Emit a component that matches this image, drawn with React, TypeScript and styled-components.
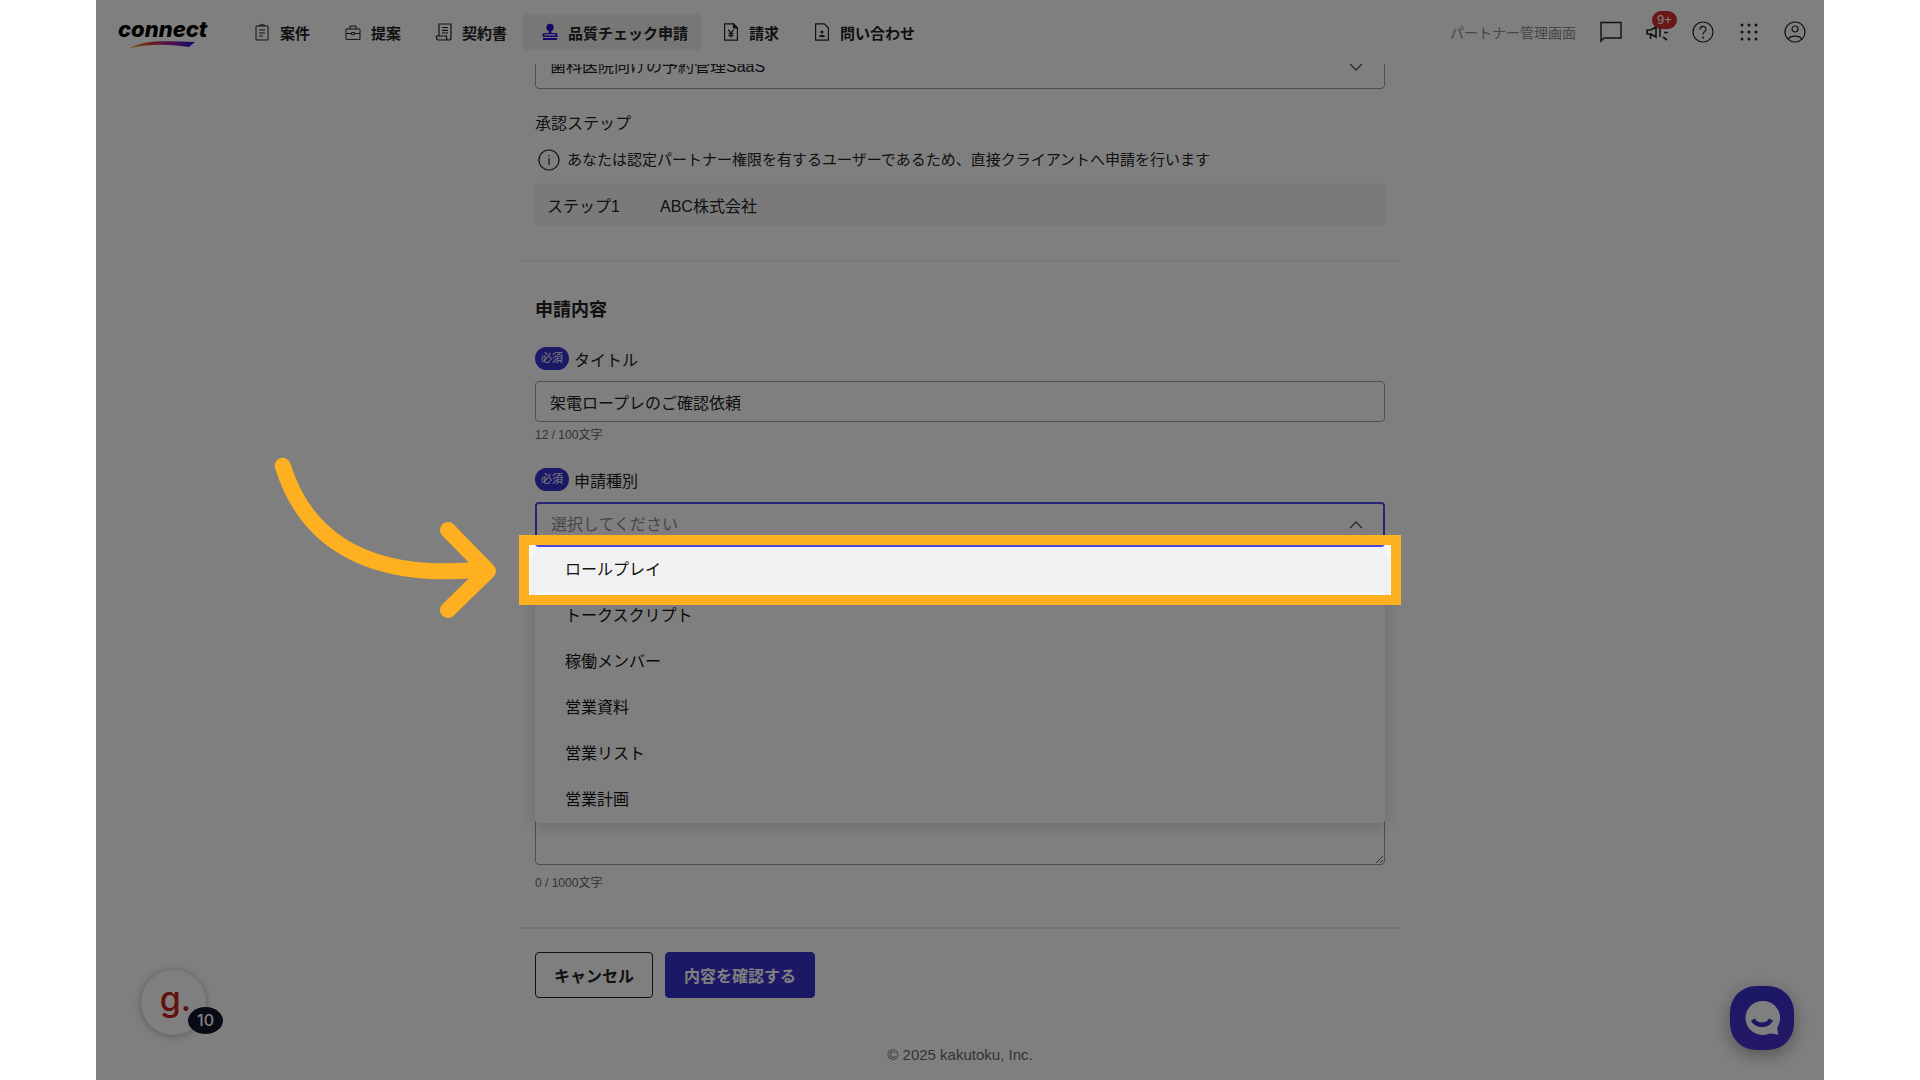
import React, { useState } from "react";
import styled, { createGlobalStyle } from "styled-components";

const color = {
  ink: "#222222",
  sub: "#666666",
  faint: "#8c8c8c",
  line: "#e8e8e8",
  softLine: "#f2f2f2",
  border: "#9a9a9a",
  brand: "#3730cc",
  focus: "#4f4ae4",
  red: "#d32f2f",
  guide: "#ffb020",
};

const Global = createGlobalStyle`
  *, *::before, *::after { box-sizing: border-box; }
  body { margin: 0; background: #ffffff; }
  body, input, select, textarea, button {
    font-family: "Liberation Sans", "Noto Sans CJK JP", sans-serif;
    color: ${color.ink};
  }
`;

const Stage = styled.div`
  position: relative;
  min-height: 100vh;
  margin: 0 5%;
  overflow: hidden;
  background: #ffffff;
`;

const Header = styled.header`
  position: relative;
  z-index: 1;
  display: flex;
  align-items: center;
  height: 64px;
  padding: 0 18px 0 22px;
  background: #ffffff;
`;

const Logo = styled.a`
  display: flex;
  flex-direction: column;
  width: 117px;
  color: #000000;
  font: italic 800 22px/24px Inter, sans-serif;
  text-decoration: none;
  svg { display: block; margin-left: 12px; }
`;

const Nav = styled.nav`
  display: flex;
  gap: 3px;
`;

const NavLink = styled.a<{ $active?: boolean }>`
  display: flex;
  align-items: center;
  gap: 9px;
  height: 36px;
  padding: 0 13px 0 18px;
  border-radius: 4px;
  background: ${(p) => (p.$active ? "#efefec" : "transparent")};
  color: ${color.ink};
  font-size: 15px;
  font-weight: 700;
  white-space: nowrap;
  text-decoration: none;
`;

const Tools = styled.div`
  display: flex;
  align-items: center;
  gap: 24px;
  margin-left: auto;
`;

const AdminLink = styled.a`
  color: ${color.faint};
  font-size: 14px;
  text-decoration: none;
`;

const IconButton = styled.button`
  position: relative;
  display: flex;
  padding: 0;
  border: 0;
  background: none;
`;

const Count = styled.span`
  position: absolute;
  top: -10px;
  left: 6px;
  padding: 0 5px;
  border-radius: 9px;
  background: ${color.red};
  color: #ffffff;
  font-size: 13px;
  line-height: 18px;
`;

const Main = styled.main`
  max-width: 880px;
  margin: -20px auto 0;
`;

const Section = styled.section`
  display: flex;
  flex-direction: column;
  padding: 0 15px;
`;

const Divider = styled.hr<{ $top: number; $soft?: boolean }>`
  height: 2px;
  margin: ${(p) => p.$top}px 0 0;
  border: 0;
  background: ${(p) => (p.$soft ? color.softLine : color.line)};
`;

const SelectBox = styled.div`
  display: grid;
  align-items: center;
  > * { grid-area: 1 / 1; }
  svg { justify-self: end; margin-right: 22px; pointer-events: none; }
`;

const Select = styled.select<{ $open?: boolean }>`
  appearance: none;
  width: 100%;
  height: 45px;
  padding: 0 14px;
  border: ${(p) => (p.$open ? `2px solid ${color.focus}` : `1px solid ${color.border}`)};
  border-radius: 4px;
  outline: 0;
  background: #ffffff;
  color: ${(p) => (p.$open ? color.faint : color.ink)};
  font-size: 16px;
`;

const StepLabel = styled.h3`
  margin: 23px 0 0;
  font-size: 16px;
  font-weight: 400;
  line-height: 24px;
`;

const Notice = styled.p`
  display: flex;
  align-items: center;
  gap: 7px;
  margin: 12px 0 0;
  padding-left: 3px;
  font-size: 15px;
  line-height: 24px;
`;

const StepRow = styled.dl`
  display: flex;
  align-items: center;
  height: 43px;
  margin: 11px 0 0;
  padding: 0 12px;
  background: #f5f5f5;
  font-size: 16px;
  dt { flex: 0 0 113px; }
  dd { margin: 0; }
`;

const Heading = styled.h2`
  margin: 36px 0 0;
  font-size: 18px;
  line-height: 24px;
`;

const Field = styled.div`
  display: flex;
  flex-direction: column;
  margin-top: 25px;
`;

const Label = styled.label`
  display: flex;
  align-items: center;
  gap: 5px;
  height: 23px;
  margin-bottom: 11px;
  font-size: 16px;
`;

const Required = styled.span`
  padding: 0 6px;
  border-radius: 12px;
  background: ${color.brand};
  color: #ffffff;
  font-size: 11px;
  line-height: 23px;
`;

const TextInput = styled.input`
  height: 41px;
  padding: 0 14px;
  border: 1px solid ${color.border};
  border-radius: 4px;
  font-size: 16px;
`;

const TextArea = styled.textarea`
  height: 243px;
  margin-top: 75px;
  padding: 14px;
  border: 1px solid ${color.border};
  border-radius: 4px;
  font-size: 16px;
`;

const Counter = styled.span<{ $top: number }>`
  margin-top: ${(p) => p.$top}px;
  color: ${color.sub};
  font-size: 12px;
  line-height: 16px;
`;

const Anchor = styled.div`
  position: relative;
`;

const Menu = styled.ul`
  position: absolute;
  top: 100%;
  left: 0;
  right: 0;
  margin: 0;
  padding: 0;
  border-radius: 0 0 4px 4px;
  background: #ffffff;
  box-shadow: 0 4px 16px rgba(0, 0, 0, 0.16);
  list-style: none;
`;

const Option = styled.li<{ $hover?: boolean }>`
  padding: 0 30px;
  background: ${(p) => (p.$hover ? "#f1f1f1" : "transparent")};
  color: #111111;
  font-size: 16px;
  line-height: 46px;
`;

const Spotlight = styled.div`
  position: absolute;
  z-index: 10;
  top: 33px;
  left: -16px;
  right: -16px;
  height: 70px;
  border: 10px solid ${color.guide};
  box-shadow: 0 0 0 3000px rgba(0, 0, 0, 0.5);
  pointer-events: none;
`;

const Arrow = styled.svg`
  position: absolute;
  z-index: 11;
  top: -46px;
  right: calc(100% + 37px);
`;

const Actions = styled.div`
  display: flex;
  gap: 12px;
  margin-top: 23px;
`;

const Button = styled.button<{ $primary?: boolean }>`
  height: 46px;
  padding: 0 18px;
  border: 1px solid ${(p) => (p.$primary ? color.brand : color.ink)};
  border-radius: 4px;
  background: ${(p) => (p.$primary ? color.brand : "#ffffff")};
  color: ${(p) => (p.$primary ? "#ffffff" : color.ink)};
  font-size: 16px;
  font-weight: 700;
`;

const Footer = styled.footer`
  margin-top: 45px;
  color: ${color.sub};
  font-size: 15px;
  line-height: 24px;
  text-align: center;
`;

const GuideButton = styled.button`
  position: absolute;
  z-index: 1;
  bottom: 45px;
  left: 45px;
  width: 65px;
  height: 65px;
  padding: 0 0 8px 4px;
  border: 0;
  border-radius: 50%;
  background: #ffffff;
  box-shadow: 0 1px 8px rgba(0, 0, 0, 0.3);
  color: #c8201a;
  font: 500 34px/34px Inter, sans-serif;
`;

const GuideCount = styled.span`
  position: absolute;
  left: 47px;
  top: 37px;
  width: 35px;
  border-radius: 50%;
  background: #10142a;
  color: #ffffff;
  font: 500 16px/27px Inter, sans-serif;
  text-align: center;
`;

const ChatButton = styled.button`
  position: absolute;
  z-index: 1;
  right: 30px;
  bottom: 30px;
  display: grid;
  place-items: center;
  width: 64px;
  height: 64px;
  padding: 0;
  border: 0;
  border-radius: 26px;
  background: linear-gradient(#3731cc, #4a30cc);
  box-shadow: 0 5px 18px rgba(0, 0, 0, 0.35);
`;

const Line = ({ size = 18, children }: { size?: number; children: React.ReactNode }) => (
  <svg width={size} height={size} viewBox={`0 0 ${size} ${size}`} fill="none" stroke="#222" strokeWidth="1.2" aria-hidden="true">
    {children}
  </svg>
);

const Chevron = ({ up }: { up?: boolean }) => (
  <svg width="14" height="8" viewBox="0 0 14 8" fill="none" stroke="#444" strokeWidth="1.2" aria-hidden="true">
    <path d={up ? "M1 7l6-6 6 6" : "M1 1l6 6 6-6"} />
  </svg>
);

const icons = {
  cases: (
    <Line>
      <path d="M3 3h12v14H3zM6.500 3V2h5v1M9 2V.8M6 7h6M6 10h6M6 13h4" strokeWidth="1" />
    </Line>
  ),
  proposal: (
    <Line>
      <path d="M2 6h14v10.400H2zM6 6V3h6v3M2 10.500h5.500M10.500 10.500H16M7.500 9.500h3v2.200h-3z" strokeWidth="1" />
    </Line>
  ),
  contract: (
    <Line>
      <path d="M4 13V1h12v14a2 2 0 0 1-2 2H3.500a2 2 0 0 1-2-2v-2h10v2a2 2 0 0 0 2 2M7 4.500h6M7 7.300h6M7 10h6" />
    </Line>
  ),
  stamp: (
    <svg width="18" height="18" viewBox="0 0 18 18" fill="#2a0fd0" aria-hidden="true">
      <circle cx="9" cy="4.500" r="3.700" />
      <path d="M8 7h2l.5 3h4.500a1.500 1.500 0 0 1 1.500 1.500V14h-15v-2.500A1.500 1.500 0 0 1 3 10h4.500zM2 15h14v2H2z" />
      <path d="M3.500 11.200h11v1.300h-11z" fill="#efefec" />
    </svg>
  ),
  invoice: (
    <Line>
      <path d="M2.600.8h9L15.400 5v12.200H2.600zM6.300 6.700L9 10.200l2.700-3.500M9 10v4.500M6.500 10.600h5M6.500 12.600h5" />
      <path d="M11.500.8L15.400 5h-3.900z" fill="#222" />
    </Line>
  ),
  inquiry: (
    <Line>
      <path d="M2.600.8h8.700L15.400 5v12.200H2.600z" />
      <circle cx="9" cy="9" r="1.500" fill="#222" stroke="none" />
      <path d="M6 14c0-3 6-3 6 0z" fill="#222" stroke="none" />
    </Line>
  ),
};

const navItems: { label: string; icon: keyof typeof icons; active?: boolean }[] = [
  { label: "案件", icon: "cases" },
  { label: "提案", icon: "proposal" },
  { label: "契約書", icon: "contract" },
  { label: "品質チェック申請", icon: "stamp", active: true },
  { label: "請求", icon: "invoice" },
  { label: "問い合わせ", icon: "inquiry" },
];

const kinds = ["ロールプレイ", "トークスクリプト", "稼働メンバー", "営業資料", "営業リスト", "営業計画"];

export default function App() {
  const [title, setTitle] = useState("架電ロープレのご確認依頼");
  const [body, setBody] = useState("");

  return (
    <>
      <Global />
      <Stage>
        <Header>
          <Logo href="#">
            connect
            <svg width="66" height="7" viewBox="0 0 66 7" aria-hidden="true">
              <defs>
                <linearGradient id="swoosh">
                  <stop offset="0" stopColor="#f5a623" />
                  <stop offset=".3" stopColor="#e0402f" />
                  <stop offset=".6" stopColor="#a0209c" />
                  <stop offset="1" stopColor="#2a10e0" />
                </linearGradient>
              </defs>
              <path d="M0 7C16-1 30 0 65 1L59 6C36 3 20 3 0 7z" fill="url(#swoosh)" />
            </svg>
          </Logo>
          <Nav>
            {navItems.map((n) => (
              <NavLink key={n.label} href="#" $active={n.active}>
                {icons[n.icon]}
                {n.label}
              </NavLink>
            ))}
          </Nav>
          <Tools>
            <AdminLink href="#">パートナー管理画面</AdminLink>
            <IconButton aria-label="メッセージ">
              <Line size={22}>
                <path d="M1 1.500h20v15.500H4L1 20z" strokeWidth="1.400" />
              </Line>
            </IconButton>
            <IconButton aria-label="お知らせ">
              <Line size={22}>
                <path d="M1 9h4l5-3v10l-5-3H1zM4.500 13V18M14 7v9M18 11.500h4M17 16l4 3" strokeWidth="1.600" />
              </Line>
              <Count>9+</Count>
            </IconButton>
            <IconButton aria-label="ヘルプ">
              <Line size={22}>
                <circle cx="11" cy="11" r="10" />
                <path d="M8 8.500c0-4 6-4 6-.3 0 2.300-3 2.600-3 5.300" />
                <circle cx="11" cy="16.500" r="1" fill="#222" stroke="none" />
              </Line>
            </IconButton>
            <IconButton aria-label="アプリ一覧">
              <Line size={22}>
                {[4, 11, 18].map((y) =>
                  [4, 11, 18].map((x) => <circle key={`${x}-${y}`} cx={x} cy={y} r="1.500" fill="#222" stroke="none" />),
                )}
              </Line>
            </IconButton>
            <IconButton aria-label="アカウント">
              <Line size={22}>
                <circle cx="11" cy="11" r="10" />
                <circle cx="11" cy="8" r="3" />
                <path d="M4.300 18.200c2-4 11.400-4 13.400 0" />
              </Line>
            </IconButton>
          </Tools>
        </Header>

        <Main>
          <Section>
            <SelectBox>
              <Select aria-label="案件">
                <option>歯科医院向けの予約管理SaaS</option>
              </Select>
              <Chevron />
            </SelectBox>
            <StepLabel>承認ステップ</StepLabel>
            <Notice>
              <Line size={22}>
                <circle cx="11" cy="11" r="10" />
                <path d="M11 9v7M11 6v1.500" />
              </Line>
              あなたは認定パートナー権限を有するユーザーであるため、直接クライアントへ申請を行います
            </Notice>
            <StepRow>
              <dt>ステップ1</dt>
              <dd>ABC株式会社</dd>
            </StepRow>
          </Section>
          <Divider $top={34} $soft />
          <Section>
            <Heading>申請内容</Heading>
            <Field>
              <Label htmlFor="title">
                <Required>必須</Required>タイトル
              </Label>
              <TextInput id="title" value={title} onChange={(e) => setTitle(e.target.value)} />
              <Counter $top={5}>{title.length} / 100文字</Counter>
            </Field>
            <Field>
              <Label htmlFor="kind">
                <Required>必須</Required>申請種別
              </Label>
              <Anchor>
                <SelectBox>
                  <Select id="kind" $open>
                    <option>選択してください</option>
                  </Select>
                  <Chevron up />
                </SelectBox>
                <Menu role="listbox" aria-label="申請種別">
                  {kinds.map((k, i) => (
                    <Option key={k} role="option" $hover={i === 0}>
                      {k}
                    </Option>
                  ))}
                </Menu>
                <Spotlight />
                <Arrow width="226" height="164" viewBox="272 456 226 164" fill="none" stroke={color.guide} strokeWidth="16" strokeLinecap="round" strokeLinejoin="round" aria-hidden="true">
                  <path d="M282.700 465.700C303 532 358 580 475 570M448 530L488 571L448 610" />
                </Arrow>
              </Anchor>
              <TextArea aria-label="申請詳細" value={body} onChange={(e) => setBody(e.target.value)} />
              <Counter $top={10}>{body.length} / 1000文字</Counter>
            </Field>
          </Section>
          <Divider $top={36} />
          <Section>
            <Actions>
              <Button type="button">キャンセル</Button>
              <Button type="button" $primary>
                内容を確認する
              </Button>
            </Actions>
          </Section>
        </Main>
        <Footer>© 2025 kakutoku, Inc.</Footer>

        <GuideButton aria-label="ガイド">
          g.
          <GuideCount>10</GuideCount>
        </GuideButton>
        <ChatButton aria-label="チャット">
          <svg width="36" height="36" viewBox="0 0 36 36" aria-hidden="true">
            <path d="M18 1a17 17 0 1 0 7 32.700c3-.8 6 1 9.500.8-.8-3-1.500-5.500-.8-8A17 17 0 0 0 18 1z" fill="#fff" />
            <path d="M9 19.500c3 7 15 7 18 0" fill="none" stroke={color.brand} strokeWidth="4.500" />
          </svg>
        </ChatButton>
      </Stage>
    </>
  );
}
